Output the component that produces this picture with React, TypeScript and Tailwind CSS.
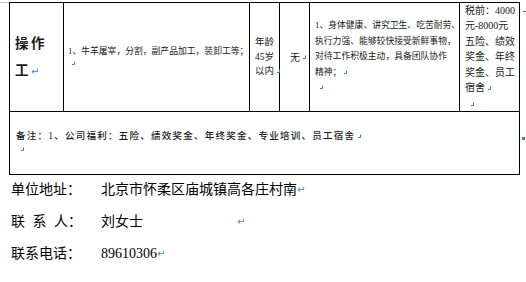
const serif = "font-['Liberation_Serif','Noto_Sans_CJK_SC',serif]";

const CellMark = () => (
  <svg width="5" height="5" viewBox="0 0 5 5" className="inline-block align-baseline ml-[2px]">
    <path d="M3.5 0.5 V3.5 H1" stroke="#3b7be0" strokeWidth="1" fill="none" />
  </svg>
);

const Ret = ({ className = "" }: { className?: string }) => (
  <span className={`font-['DejaVu_Sans',sans-serif] text-[10px] text-[#4a86e0] ${className}`}>↵</span>
);

export default function App() {
  return (
    <div className={`w-[526px] h-[282px] bg-white text-[#1a1a1a] overflow-hidden ${serif}`}>
      <div className="relative pt-[2px] pl-[9px]">
        <div className="absolute left-0 top-[2px] w-[9px] h-px bg-[#c8c8c8]" />
        <div className="absolute left-[523px] top-[11px] w-[3px] h-px bg-[#3b7be0]" />
        <div className="absolute left-[522px] top-[137px] w-[3px] h-[3px] bg-[#3b7be0]" />

        <div className="grid w-[511px] grid-cols-[53px_185px_29px_29px_149px_59px] grid-rows-[108px_62px] gap-px border border-black bg-black">
          <div className="flex flex-col justify-center bg-white pl-[5px] text-[13.5px] font-bold leading-[27px] tracking-[2.5px]">
            <div>操作</div>
            <div>
              工<Ret className="font-normal tracking-normal" />
            </div>
          </div>

          <div className="flex flex-col justify-center bg-white pl-[4px] text-[8.8px] leading-[12px] whitespace-nowrap">
            <div>
              1、牛羊屠宰，分割，副产品加工，装卸工等；<CellMark />
            </div>
            <div className="pl-[1px]">
              <CellMark />
            </div>
          </div>

          <div className="flex flex-col justify-center bg-white pl-[5px] text-[9.5px] leading-[14.5px] whitespace-nowrap">
            <div>年龄</div>
            <div>45岁</div>
            <div>
              以内<CellMark />
            </div>
          </div>

          <div className="flex items-center bg-white pl-[10px] text-[10px] whitespace-nowrap">
            无<CellMark />
          </div>

          <div className="flex flex-col justify-center bg-white pl-[5px] text-[8.8px] leading-[15.5px] whitespace-nowrap">
            <div>1、身体健康、讲究卫生、吃苦耐劳、</div>
            <div>执行力强、能够较快接受新鲜事物，</div>
            <div>对待工作积极主动，具备团队协作</div>
            <div>
              精神；<CellMark />
            </div>
            <div className="pl-[2px]">
              <CellMark />
            </div>
          </div>

          <div className="flex flex-col justify-center bg-white pl-[5px] text-[10px] leading-[15.5px] whitespace-nowrap">
            <div>税前：4000</div>
            <div>元-8000元</div>
            <div>五险、绩效</div>
            <div>奖金、年终</div>
            <div>奖金、员工</div>
            <div>
              宿舍<CellMark />
            </div>
            <div className="pl-[3px]">
              <CellMark />
            </div>
          </div>

          <div className="col-span-6 bg-white pl-[6px] pt-[18px] text-[9.5px] font-medium leading-[13px] tracking-[1.25px] whitespace-nowrap">
            <div>
              备注：1、公司福利：五险、绩效奖金、年终奖金、专业培训、员工宿舍<CellMark />
            </div>
            <div className="pl-[2px]">
              <CellMark />
            </div>
          </div>
        </div>
      </div>

      <div className="-mt-px pl-[11px] text-[14px] leading-[32px] text-black">
        <div className="flex">
          <span className="w-[90px]">单位地址：</span>
          <span>北京市怀柔区庙城镇高各庄村南</span>
          <Ret />
        </div>
        <div className="flex">
          <span className="w-[90px] [word-spacing:4px]">联 系 人：</span>
          <span className="w-[136px]">刘女士</span>
          <Ret />
        </div>
        <div className="flex">
          <span className="w-[90px]">联系电话：</span>
          <span>89610306</span>
          <Ret />
        </div>
      </div>
    </div>
  );
}
